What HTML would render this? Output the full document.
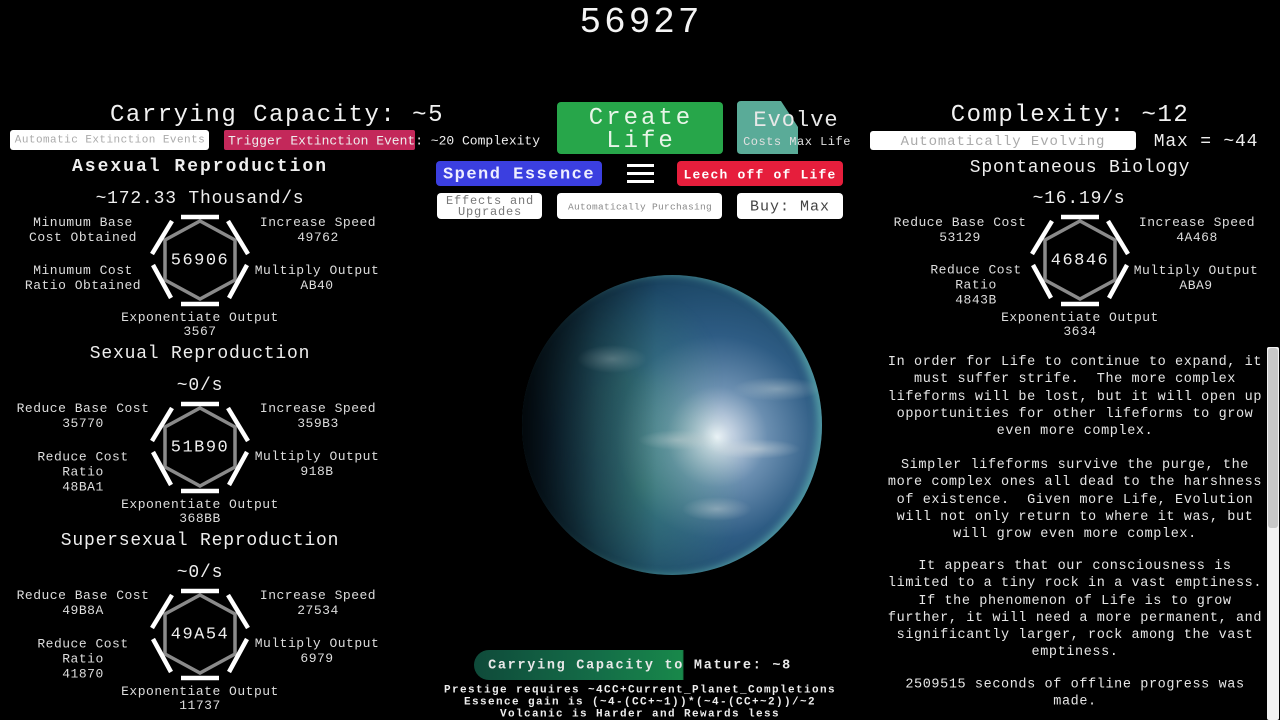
<!DOCTYPE html>
<html><head><meta charset="utf-8"><style>
html,body{margin:0;padding:0;background:#000;width:1280px;height:720px;overflow:hidden;}
body{position:relative;font-family:"Liberation Mono",monospace;color:#eee;}
.t{position:absolute;transform:translate(-50%,calc(-50% + 2px));white-space:pre;text-align:center;line-height:1;}
.s{font-size:13px;letter-spacing:0.5px;color:#ddd;}
.h{font-size:24px;letter-spacing:1.5px;color:#f2f2f2;}
.m{font-size:18px;letter-spacing:0.8px;color:#eee;}
.box{position:absolute;border-radius:4px;}
svg.hex{position:absolute;overflow:visible;}
.p{font-size:13.5px;letter-spacing:0.6px;color:#e6e6e6;}
.b{font-weight:bold;font-size:11px;letter-spacing:1.4px;color:#eee;}
</style></head><body>

<div class="t" style="left:641px;top:21px;font-size:36px;letter-spacing:3px;color:#f4f4f4">56927</div>

<!-- LEFT -->
<div class="t h" style="left:277px;top:114px">Carrying Capacity: ~5</div>
<div class="box" style="left:10px;top:130px;width:199px;height:20px;background:#fff;border-radius:3px"></div>
<div class="t" style="left:110px;top:139px;font-size:11px;letter-spacing:0.45px;color:#aaa">Automatic Extinction Events</div>
<div class="box" style="left:224px;top:130px;width:191px;height:20px;background:#c3285a;border-radius:2px"></div>
<div class="t" style="left:384px;top:139px;font-size:13px;letter-spacing:0px;color:#eee">Trigger Extinction Event: ~20 Complexity</div>

<div class="t" style="left:200px;top:165px;font-size:18px;font-weight:bold;letter-spacing:2px">Asexual Reproduction</div>
<div class="t m" style="left:200px;top:197px">~172.33 Thousand/s</div>
<div class="t s" style="left:83px;top:228px;line-height:15px">Minumum Base
Cost Obtained</div>
<div class="t s" style="left:83px;top:276px;line-height:15px">Minumum Cost
Ratio Obtained</div>
<div class="t s" style="left:318px;top:228px;line-height:15px">Increase Speed
49762</div>
<div class="t s" style="left:317px;top:276px;line-height:15px">Multiply Output
AB40</div>
<div class="t s" style="left:200px;top:323px;line-height:14px">Exponentiate Output
3567</div>

<div class="t m" style="left:200px;top:352px">Sexual Reproduction</div>
<div class="t m" style="left:200px;top:384px">~0/s</div>
<div class="t s" style="left:83px;top:414px;line-height:15px">Reduce Base Cost
35770</div>
<div class="t s" style="left:83px;top:470px;line-height:15px">Reduce Cost
Ratio
48BA1</div>
<div class="t s" style="left:318px;top:414px;line-height:15px">Increase Speed
359B3</div>
<div class="t s" style="left:317px;top:462px;line-height:15px">Multiply Output
918B</div>
<div class="t s" style="left:200px;top:510px;line-height:14px">Exponentiate Output
368BB</div>

<div class="t m" style="left:200px;top:539px">Supersexual Reproduction</div>
<div class="t m" style="left:200px;top:571px">~0/s</div>
<div class="t s" style="left:83px;top:601px;line-height:15px">Reduce Base Cost
49B8A</div>
<div class="t s" style="left:83px;top:657px;line-height:15px">Reduce Cost
Ratio
41870</div>
<div class="t s" style="left:318px;top:601px;line-height:15px">Increase Speed
27534</div>
<div class="t s" style="left:317px;top:649px;line-height:15px">Multiply Output
6979</div>
<div class="t s" style="left:200px;top:697px;line-height:14px">Exponentiate Output
11737</div>

<!-- hexagons -->
<svg class="hex" width="0" height="0" style="left:0;top:0">
<defs><g id="hx">
<polygon points="0,-39 35,-20 35,20 0,39 -35,20 -35,-20" fill="none" stroke="#8a8a8a" stroke-width="3.5"/>
<g stroke="#fff" stroke-width="4.5" stroke-linecap="butt">
<line x1="-19" y1="-43" x2="19" y2="-43"/><line x1="-19" y1="44" x2="19" y2="44"/>
<line x1="28" y1="-39" x2="48" y2="-6"/><line x1="47" y1="5" x2="29" y2="38"/>
<line x1="-28" y1="-39" x2="-48" y2="-6"/><line x1="-47" y1="5" x2="-29" y2="38"/>
</g></g></defs></svg>
<svg class="hex" width="120" height="120" style="left:140px;top:200px" viewBox="-60 -60 120 120"><use href="#hx"/></svg>
<svg class="hex" width="120" height="120" style="left:140px;top:387px" viewBox="-60 -60 120 120"><use href="#hx"/></svg>
<svg class="hex" width="120" height="120" style="left:140px;top:574px" viewBox="-60 -60 120 120"><use href="#hx"/></svg>
<svg class="hex" width="120" height="120" style="left:1020px;top:200px" viewBox="-60 -60 120 120"><use href="#hx"/></svg>
<div class="t" style="left:200px;top:259px;font-size:17px;letter-spacing:1.5px">56906</div>
<div class="t" style="left:200px;top:446px;font-size:17px;letter-spacing:1.5px">51B90</div>
<div class="t" style="left:200px;top:633px;font-size:17px;letter-spacing:1.5px">49A54</div>
<div class="t" style="left:1080px;top:259px;font-size:17px;letter-spacing:1.5px">46846</div>

<!-- CENTER -->
<div class="box" style="left:557px;top:102px;width:166px;height:52px;background:#27a64a"></div>
<div class="t" style="left:641px;top:128px;font-size:24px;letter-spacing:3px;line-height:23px;color:#e8f5e8">Create
Life</div>
<svg style="position:absolute;left:737px;top:101px" width="62" height="53"><path d="M4 0 H44 L61 26 V53 H4 Q0 53 0 49 V4 Q0 0 4 0Z" fill="#5aab98"/></svg>
<div class="t" style="left:796px;top:119px;font-size:22px;letter-spacing:1px;color:#e8e8e8">Evolve</div>
<div class="t" style="left:797px;top:140px;font-size:12px;letter-spacing:0.5px;color:#e0e0e0">Costs Max Life</div>

<div class="box" style="left:436px;top:161px;width:166px;height:25px;background:#3b3fe0"></div>
<div class="t" style="left:519px;top:173px;font-size:17px;font-weight:bold;letter-spacing:1.5px;color:#eef">Spend Essence</div>
<div class="box" style="left:627px;top:164px;width:27px;height:3px;background:#fff;border-radius:0"></div>
<div class="box" style="left:627px;top:172px;width:27px;height:3px;background:#fff;border-radius:0"></div>
<div class="box" style="left:627px;top:180px;width:27px;height:3px;background:#fff;border-radius:0"></div>
<div class="box" style="left:677px;top:161px;width:166px;height:25px;background:#e61e3c"></div>
<div class="t" style="left:760px;top:173px;font-size:13px;font-weight:bold;letter-spacing:1.2px;color:#fff">Leech off of Life</div>

<div class="box" style="left:437px;top:193px;width:105px;height:26px;background:#fff"></div>
<div class="t" style="left:490px;top:205px;font-size:12px;letter-spacing:0.8px;line-height:11px;color:#777">Effects and
Upgrades</div>
<div class="box" style="left:557px;top:193px;width:165px;height:26px;background:#fff"></div>
<div class="t" style="left:640px;top:205px;font-size:9.5px;letter-spacing:0.3px;color:#888">Automatically Purchasing</div>
<div class="box" style="left:737px;top:193px;width:106px;height:26px;background:#fff"></div>
<div class="t" style="left:790px;top:205px;font-size:15px;letter-spacing:1px;color:#444">Buy: Max</div>

<!-- planet -->
<div style="position:absolute;left:522px;top:275px;width:300px;height:300px;border-radius:50%;
background:radial-gradient(circle at 65% 54%, #f4f8ff 0%, #c4d2e2 6%, #6a8eb0 20%, #2e5c84 40%, #1e4a6a 60%, #12344a 78%, #04121a 100%);
box-shadow: inset -5px 0 8px rgba(120,220,200,0.5);"></div>
<div style="position:absolute;left:522px;top:275px;width:300px;height:300px;border-radius:50%;
background:radial-gradient(ellipse 40px 10px at 52% 55%, rgba(200,210,210,0.45), rgba(0,0,0,0)), radial-gradient(ellipse 45px 10px at 78% 58%, rgba(220,225,225,0.5), rgba(0,0,0,0)), radial-gradient(ellipse 35px 12px at 65% 78%, rgba(220,225,225,0.4), rgba(0,0,0,0)), radial-gradient(ellipse 45px 12px at 85% 38%, rgba(210,220,220,0.4), rgba(0,0,0,0)), radial-gradient(ellipse 35px 14px at 30% 28%, rgba(200,210,210,0.3), rgba(0,0,0,0)), linear-gradient(90deg, rgba(0,0,0,0.85) 0%, rgba(0,0,0,0.3) 25%, rgba(0,0,0,0) 45%), radial-gradient(ellipse at 40% 70%, rgba(60,160,90,0.35), rgba(0,0,0,0) 40%), radial-gradient(ellipse at 35% 35%, rgba(60,150,100,0.3), rgba(0,0,0,0) 35%);"></div>

<div style="position:absolute;left:474px;top:650px;width:316px;height:30px;border-radius:15px 0 0 15px;background:linear-gradient(90deg,#0f4a3a 0%,#146e48 40%,#18884a 66%,#000 66.5%)"></div>
<div class="t" style="left:640px;top:664px;font-size:13.5px;font-weight:bold;letter-spacing:1.7px;color:#e8e8e8">Carrying Capacity to Mature: ~8</div>
<div class="t b" style="left:640px;top:689px">Prestige requires ~4CC+Current_Planet_Completions</div>
<div class="t b" style="left:640px;top:701px">Essence gain is (~4-(CC+~1))*(~4-(CC+~2))/~2</div>
<div class="t b" style="left:640px;top:713px">Volcanic is Harder and Rewards less</div>

<!-- RIGHT -->
<div class="t h" style="left:1070px;top:114px">Complexity: ~12</div>
<div class="box" style="left:870px;top:131px;width:266px;height:19px;background:#fff;border-radius:3px"></div>
<div class="t" style="left:1003px;top:140px;font-size:14px;letter-spacing:0.9px;color:#aaa">Automatically Evolving</div>
<div class="t" style="left:1206px;top:140px;font-size:18px;letter-spacing:0.8px">Max = ~44</div>
<div class="t m" style="left:1080px;top:166px">Spontaneous Biology</div>
<div class="t m" style="left:1079px;top:197px">~16.19/s</div>
<div class="t s" style="left:960px;top:228px;line-height:15px">Reduce Base Cost
53129</div>
<div class="t s" style="left:976px;top:283px;line-height:15px">Reduce Cost
Ratio
4843B</div>
<div class="t s" style="left:1197px;top:228px;line-height:15px">Increase Speed
4A468</div>
<div class="t s" style="left:1196px;top:276px;line-height:15px">Multiply Output
ABA9</div>
<div class="t s" style="left:1080px;top:323px;line-height:14px">Exponentiate Output
3634</div>

<div class="t p" style="left:1075px;top:395px;line-height:17.3px">In order for Life to continue to expand, it
must suffer strife.  The more complex
lifeforms will be lost, but it will open up
opportunities for other lifeforms to grow
even more complex.</div>
<div class="t p" style="left:1075px;top:498px;line-height:17.3px">Simpler lifeforms survive the purge, the
more complex ones all dead to the harshness
of existence.  Given more Life, Evolution
will not only return to where it was, but
will grow even more complex.</div>
<div class="t p" style="left:1075px;top:608px;line-height:17.3px">It appears that our consciousness is
limited to a tiny rock in a vast emptiness.
If the phenomenon of Life is to grow
further, it will need a more permanent, and
significantly larger, rock among the vast
emptiness.</div>
<div class="t p" style="left:1075px;top:692px;line-height:17.3px">2509515 seconds of offline progress was
made.</div>

<div style="position:absolute;left:1267px;top:347px;width:12px;height:373px;background:#f2f2f2;border-radius:2px"></div>
<div style="position:absolute;left:1268px;top:348px;width:10px;height:180px;background:#c8c8c8;border-radius:3px"></div>
</body></html>
